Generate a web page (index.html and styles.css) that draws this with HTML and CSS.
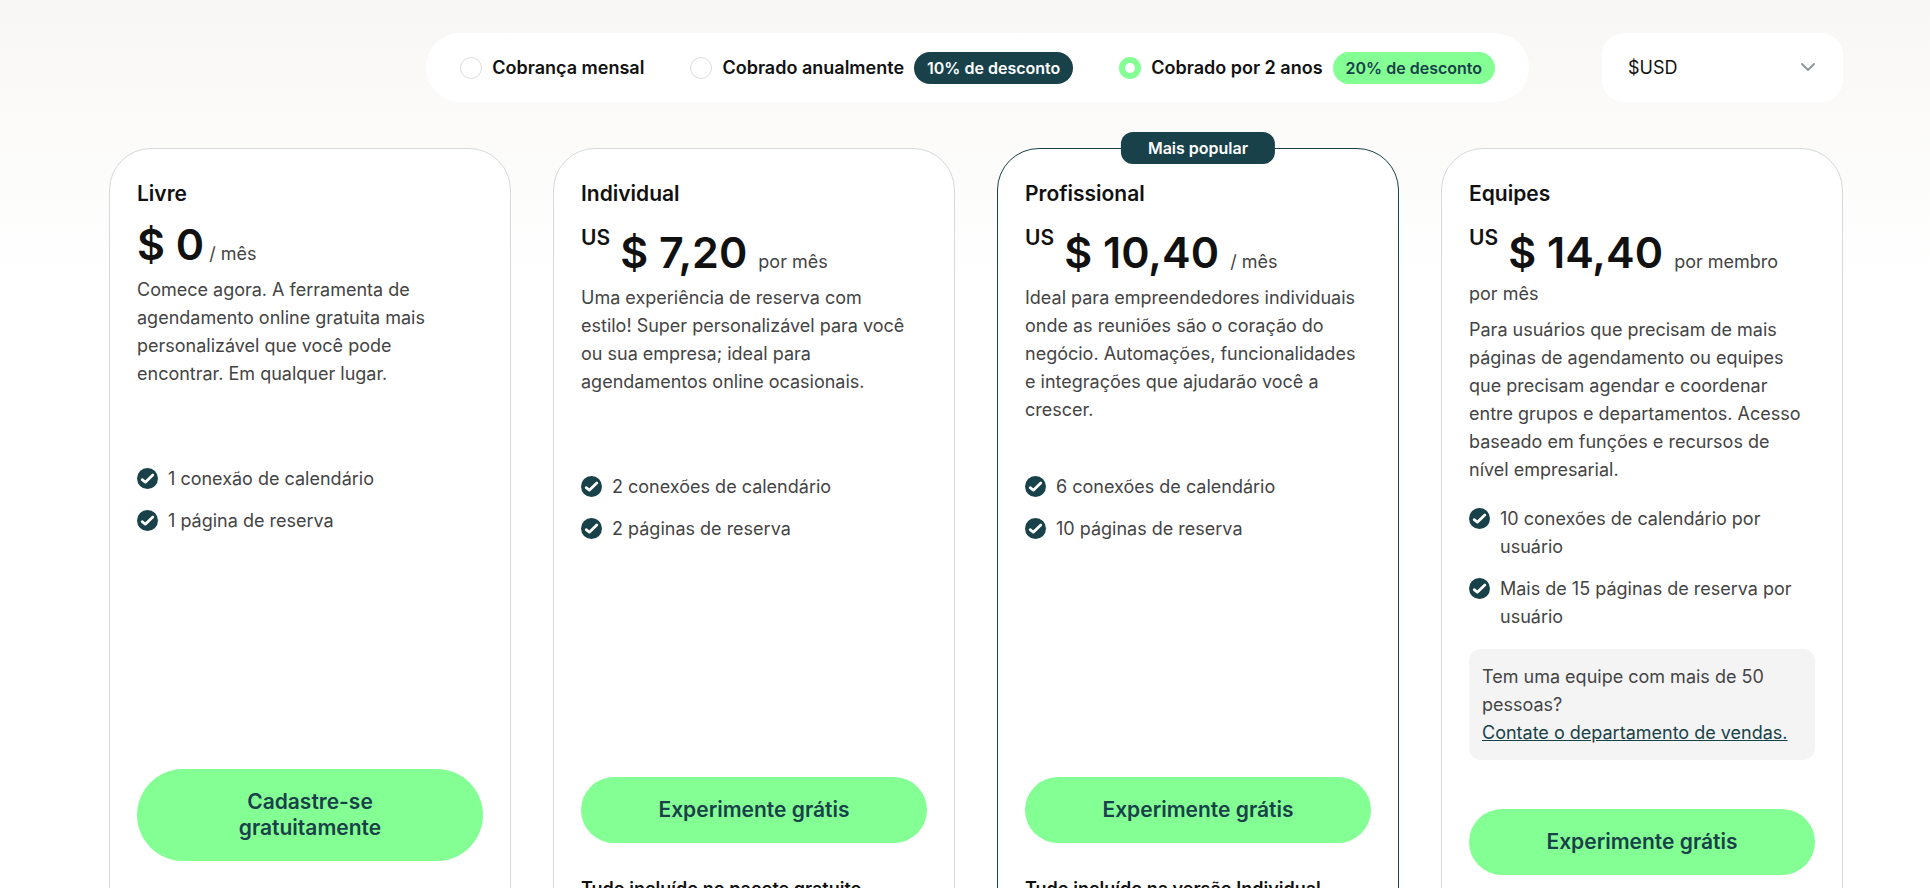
FILE: index.html
```html
<!DOCTYPE html>
<html lang="pt-BR">
<head>
<meta charset="utf-8">
<meta name="viewport" content="width=device-width, initial-scale=1">
<title>Planos e preços</title>
<link rel="stylesheet" href="styles.css">
</head>
<body>
<svg class="sprite" aria-hidden="true">
  <symbol id="check" viewBox="0 0 21 21">
    <circle cx="10.5" cy="10.5" r="10.5" fill="#194149"/>
    <path d="M5.2 11.6 8.3 14.2 15.8 7" fill="none" stroke="#fff" stroke-width="2.7" stroke-linecap="round" stroke-linejoin="round"/>
  </symbol>
</svg>
<main class="pricing">
  <form class="toolbar">
    <div class="billing">
      <label class="option"><input class="radio" type="radio" name="billing"><span>Cobrança mensal</span></label>
      <label class="option"><input class="radio" type="radio" name="billing"><span class="option-text">Cobrado anualmente</span><span class="discount discount-dark">10% de desconto</span></label>
      <label class="option"><input class="radio" type="radio" name="billing" checked><span class="option-text">Cobrado por 2 anos</span><span class="discount">20% de desconto</span></label>
    </div>
    <div class="currency">
      <select class="currency-select" aria-label="Moeda"><option>$USD</option></select>
      <svg class="chevron" viewBox="0 0 16 10" aria-hidden="true"><path d="M2 2l6 6 6-6" fill="none" stroke="#8f969b" stroke-width="2" stroke-linecap="round" stroke-linejoin="round"/></svg>
    </div>
  </form>

  <div class="plans">
    <section class="plan">
      <h2 class="plan-name">Livre</h2>
      <p class="price"><span class="amount">$ 0</span> / mês</p>
      <p class="description">Comece agora. A ferramenta de agendamento online gratuita mais personalizável que você pode encontrar. Em qualquer lugar.</p>
      <div class="details">
        <ul class="features">
          <li class="feature"><svg class="check"><use href="#check"/></svg><span>1 conexão de calendário</span></li>
          <li class="feature"><svg class="check"><use href="#check"/></svg><span>1 página de reserva</span></li>
        </ul>
      </div>
      <button class="cta" type="button">Cadastre-se gratuitamente</button>
    </section>

    <section class="plan">
      <h2 class="plan-name">Individual</h2>
      <p class="price"><span class="country">US</span> <span class="amount amount-paid">$ 7,20</span> por mês</p>
      <p class="description">Uma experiência de reserva com estilo! Super personalizável para você ou sua empresa; ideal para agendamentos online ocasionais.</p>
      <div class="details">
        <ul class="features">
          <li class="feature"><svg class="check"><use href="#check"/></svg><span>2 conexões de calendário</span></li>
          <li class="feature"><svg class="check"><use href="#check"/></svg><span>2 páginas de reserva</span></li>
        </ul>
      </div>
      <button class="cta" type="button">Experimente grátis</button>
      <h3 class="included">Tudo incluído no pacote gratuito</h3>
    </section>

    <section class="plan plan-popular">
      <span class="popular">Mais popular</span>
      <h2 class="plan-name">Profissional</h2>
      <p class="price"><span class="country">US</span> <span class="amount amount-paid">$ 10,40</span> / mês</p>
      <p class="description">Ideal para empreendedores individuais onde as reuniões são o coração do negócio. Automações, funcionalidades e integrações que ajudarão você a crescer.</p>
      <div class="details">
        <ul class="features">
          <li class="feature"><svg class="check"><use href="#check"/></svg><span>6 conexões de calendário</span></li>
          <li class="feature"><svg class="check"><use href="#check"/></svg><span>10 páginas de reserva</span></li>
        </ul>
      </div>
      <button class="cta" type="button">Experimente grátis</button>
      <h3 class="included">Tudo incluído na versão Individual</h3>
    </section>

    <section class="plan">
      <h2 class="plan-name">Equipes</h2>
      <p class="price"><span class="country">US</span> <span class="amount amount-paid">$ 14,40</span> por membro por&nbsp;mês</p>
      <p class="description">Para usuários que precisam de mais páginas de agendamento ou equipes que precisam agendar e coordenar entre grupos e departamentos. Acesso baseado em funções e recursos de nível empresarial.</p>
      <div class="details">
        <ul class="features">
          <li class="feature"><svg class="check"><use href="#check"/></svg><span>10 conexões de calendário por usuário</span></li>
          <li class="feature"><svg class="check"><use href="#check"/></svg><span>Mais de 15 páginas de reserva por usuário</span></li>
        </ul>
        <p class="sales">Tem uma equipe com mais de 50 pessoas?<br><a class="sales-link" href="#">Contate o departamento de vendas.</a></p>
      </div>
      <button class="cta" type="button">Experimente grátis</button>
    </section>
  </div>
</main>
</body>
</html>
```
FILE: styles.css
```css
* { box-sizing: border-box; }

body {
  margin: 0;
  height: 100vh;
  overflow: hidden;
  background: #fff linear-gradient(#f8f7f5, #fff) no-repeat 0 0 / 100% 280px;
  color: #444;
  font: 400 18px/28px Inter, "Liberation Sans", sans-serif;
}

h2, h3, p, ul { margin: 0; padding: 0; }

.sprite { display: none; }

.pricing { padding: 33px 87px 0 109px; }

.toolbar {
  display: flex;
  justify-content: flex-end;
  gap: 73px;
  margin-bottom: 46px;
}

.billing {
  display: flex;
  align-items: center;
  gap: 46px;
  height: 69px;
  padding: 0 34px;
  border-radius: 35px;
  background: #fff;
  color: #111;
  font-weight: 600;
}

.option { display: flex; align-items: center; }

.radio {
  appearance: none;
  width: 22px;
  height: 22px;
  margin: 0 10px 0 0;
  border: 1px solid #ddd;
  border-radius: 50%;
  background: #fff;
}
.radio:checked { border: 6px solid #84ff94; }

.option-text { margin-right: 10px; }

.discount {
  padding: 0 13px;
  border-radius: 16px;
  background: #84ff94;
  color: #194149;
  font-size: 16px;
  font-weight: 600;
  line-height: 32px;
}
.discount-dark { background: #194149; color: #fff; }

.currency {
  position: relative;
  width: 241px;
}
.currency-select {
  appearance: none;
  width: 100%;
  height: 69px;
  padding: 0 26px;
  border: 0;
  border-radius: 22px;
  background: #fff;
  color: #111;
  font: inherit;
}
.chevron {
  position: absolute;
  top: 29px;
  right: 27px;
  width: 16px;
  height: 10px;
  pointer-events: none;
}

.plans {
  display: grid;
  grid-template-columns: repeat(4, minmax(0, 1fr));
  gap: 42px;
}

.plan {
  position: relative;
  padding: 31px 27px 64px;
  border: 1px solid #d5dadb;
  border-radius: 42px;
  background: #fff;
}
.plan-popular { border-color: #194149; }

.popular {
  position: absolute;
  top: -1px;
  left: 50%;
  transform: translate(-50%, -50%);
  padding: 0 27px;
  border-radius: 12px;
  background: #194149;
  color: #fff;
  font-size: 16px;
  font-weight: 600;
  line-height: 32px;
  white-space: nowrap;
}

.plan-name {
  margin-bottom: 14px;
  color: #111;
  font-size: 21px;
  font-weight: 600;
}

.price {
  margin-bottom: 6px;
  line-height: 32px;
}
.country {
  color: #111;
  font-size: 21px;
  font-weight: 600;
  vertical-align: 23px;
}
.amount {
  color: #111;
  font-size: 43px;
  font-weight: 600;
  line-height: 44px;
}
.amount-paid { margin: 0 6px 0 5px; }

.description {
  min-height: 168px;
  margin-bottom: 21px;
  padding-right: 12px;
}

.details { min-height: 304px; }

.features {
  display: grid;
  gap: 14px;
  list-style: none;
}
.feature { display: flex; gap: 10px; }
.check {
  flex: none;
  width: 21px;
  height: 21px;
  margin-top: 3px;
}

.sales {
  margin-top: 18px;
  padding: 14px 13px 13px;
  border-radius: 12px;
  background: #f4f4f4;
}
.sales-link { color: #194149; }

.cta {
  display: block;
  width: 100%;
  padding: 20px 64px;
  border: 0;
  border-radius: 46px;
  background: #84ff94;
  color: #194149;
  font: 600 21px/26px Inter, "Liberation Sans", sans-serif;
}

.included {
  margin-top: 32px;
  color: #111;
  font-size: 18px;
  font-weight: 600;
}
```
